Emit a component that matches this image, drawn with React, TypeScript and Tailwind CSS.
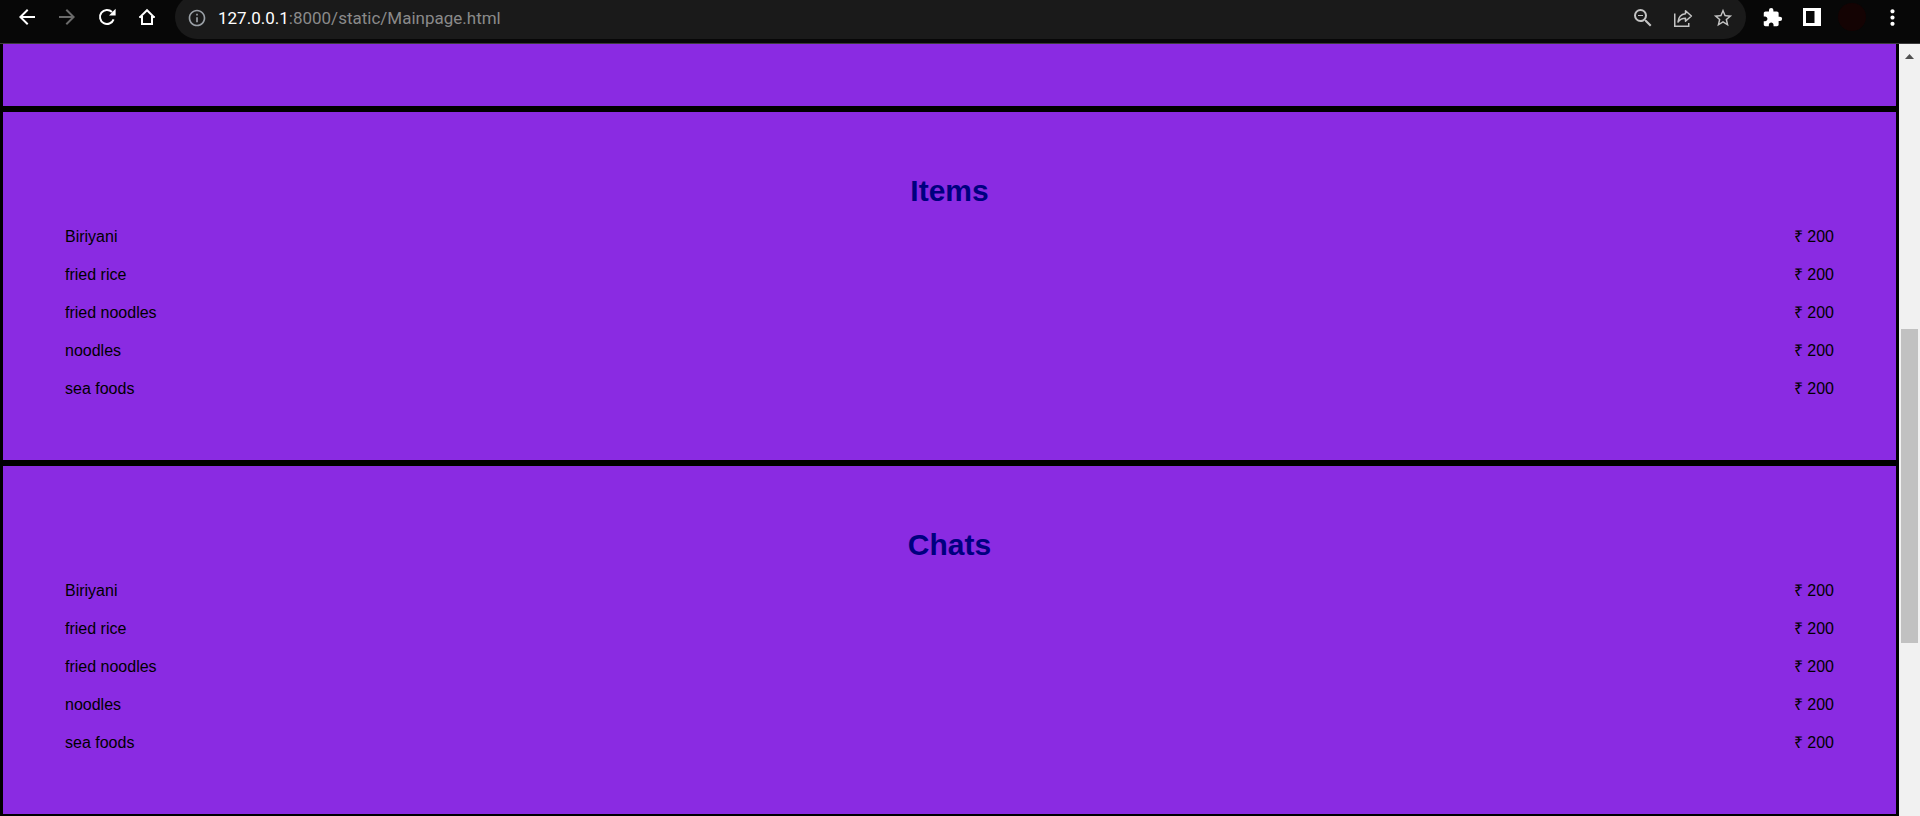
import type { ReactNode } from "react";
import {
  MdArrowBack,
  MdArrowForward,
  MdExtension,
  MdInfoOutline,
  MdMoreVert,
  MdStarBorder,
  MdZoomOut,
} from "react-icons/md";

type Item = { name: string; price: number };

const items: Item[] = [
  { name: "Biriyani", price: 200 },
  { name: "fried rice", price: 200 },
  { name: "fried noodles", price: 200 },
  { name: "noodles", price: 200 },
  { name: "sea foods", price: 200 },
];

function IconButton({ label, className = "", children }: { label: string; className?: string; children: ReactNode }) {
  return (
    <button type="button" aria-label={label} className={`flex size-7 shrink-0 items-center justify-center ${className}`}>
      {children}
    </button>
  );
}

function ReloadIcon() {
  return (
    <svg width="20" height="20" viewBox="0 0 20 20" fill="none">
      <path d="M16.6 12.3A7 7 0 1 1 15 5" stroke="currentColor" strokeWidth="2" />
      <path d="M18.6 1.8v6.6H12z" fill="currentColor" />
    </svg>
  );
}

function HomeIcon() {
  return (
    <svg width="20" height="20" viewBox="0 0 20 20" fill="none" stroke="currentColor" strokeWidth="2">
      <path d="M5 9v8h10V9" />
      <path d="M2.5 10.6 10 3.2l7.500 7.400" />
      <path d="M2.400 10H5.500M14.500 10h3.100" strokeWidth="1.500" />
    </svg>
  );
}

function ShareIcon() {
  return (
    <svg width="20" height="20" viewBox="0 0 20 20" fill="none" stroke="currentColor" strokeWidth="1.500">
      <path d="M1.750 5.500v12.750h14V15" />
      <path d="M12.500 2.700 18.400 8l-5.900 5.300v-3.100C9 10.200 6.800 11.400 5 14c.4-4.500 2.800-7.800 7.500-8.300z" strokeLinejoin="round" />
    </svg>
  );
}

function SidePanelIcon() {
  return (
    <svg width="18" height="18" viewBox="0 0 18 18">
      <path fill="currentColor" fillRule="evenodd" d="M0 0h18v18H0zM3 3v12h8.500V3z" />
    </svg>
  );
}

function Toolbar() {
  return (
    <header className="flex h-11 shrink-0 items-start gap-3 overflow-hidden border-b border-[#3c3c3c] bg-[#070707] pr-3.5 pl-[13px] text-white">
      <nav className="flex gap-3 pt-[3px]">
        <IconButton label="Back">
          <MdArrowBack size={24} />
        </IconButton>
        <IconButton label="Forward" className="text-[#6b6b6b]">
          <MdArrowForward size={24} />
        </IconButton>
        <IconButton label="Reload">
          <ReloadIcon />
        </IconButton>
        <IconButton label="Home">
          <HomeIcon />
        </IconButton>
      </nav>

      <div className="-mt-[5px] ml-0.5 flex h-11 flex-1 items-center rounded-full bg-[#1a1a1a] pt-0.5 pr-[9px] pl-2">
        <IconButton label="Site information" className="text-[#9aa0a6]">
          <MdInfoOutline size={20} />
        </IconButton>
        <a
          href="http://127.0.0.1:8000/static/Mainpage.html"
          className="ml-[7px] flex-1 font-[Roboto,'Open_Sans',sans-serif] text-[17px] leading-6 text-[#8a8a8a]"
        >
          <span className="text-white">127.0.0.1</span>:8000/static/Mainpage.html
        </a>
        <div className="flex gap-3 text-[#c4c4c4]">
          <IconButton label="Zoom">
            <MdZoomOut size={24} />
          </IconButton>
          <IconButton label="Share">
            <ShareIcon />
          </IconButton>
          <IconButton label="Bookmark">
            <MdStarBorder size={22} />
          </IconButton>
        </div>
      </div>

      <div className="flex gap-3 pt-[3px]">
        <IconButton label="Extensions">
          <MdExtension size={21} />
        </IconButton>
        <IconButton label="Side panel">
          <SidePanelIcon />
        </IconButton>
        <IconButton label="Profile">
          <span className="size-7 rounded-full bg-[#140303]" />
        </IconButton>
        <IconButton label="Menu">
          <MdMoreVert size={25} />
        </IconButton>
      </div>
    </header>
  );
}

function MenuSection({ title, rows }: { title: string; rows: Item[] }) {
  return (
    <section className="border-[3px] border-black bg-[#8a2be2] px-[62px] pt-[61px] pb-[52px]">
      <h2 className="mb-[9px] text-center text-[30px] leading-9 font-bold text-[#000080]">{title}</h2>
      <table className="w-full">
        <tbody>
          {rows.map((row) => (
            <tr key={row.name} className="h-[38px]">
              <th scope="row" className="p-0 text-left font-normal">
                {row.name}
              </th>
              <td className="p-0 text-right">₹ {row.price}</td>
            </tr>
          ))}
        </tbody>
      </table>
    </section>
  );
}

function Scrollbar() {
  return (
    <div className="flex w-[21px] shrink-0 flex-col items-center bg-[#f1f1f1]">
      <button type="button" aria-label="Scroll up" className="flex h-6 w-full items-center justify-center text-[#505050]">
        <svg width="9" height="5" viewBox="0 0 9 5">
          <path d="M0 5 4.500 0 9 5z" fill="currentColor" />
        </svg>
      </button>
      <div className="flex-[261]" />
      <div className="w-[17px] flex-[314] bg-[#c1c1c1]" />
      <div className="flex-[173]" />
    </div>
  );
}

export default function App() {
  return (
    <div className="flex h-screen flex-col bg-black">
      <Toolbar />
      <div className="flex min-h-0 flex-1">
        <main className="flex-1 overflow-hidden font-['Liberation_Sans',Arial,sans-serif] text-base leading-[18px] text-black">
          <div className="border-x-[3px] border-b-[3px] border-black bg-[#8a2be2] pt-[62px]" />
          <MenuSection title="Items" rows={items} />
          <MenuSection title="Chats" rows={items} />
        </main>
        <Scrollbar />
      </div>
    </div>
  );
}
